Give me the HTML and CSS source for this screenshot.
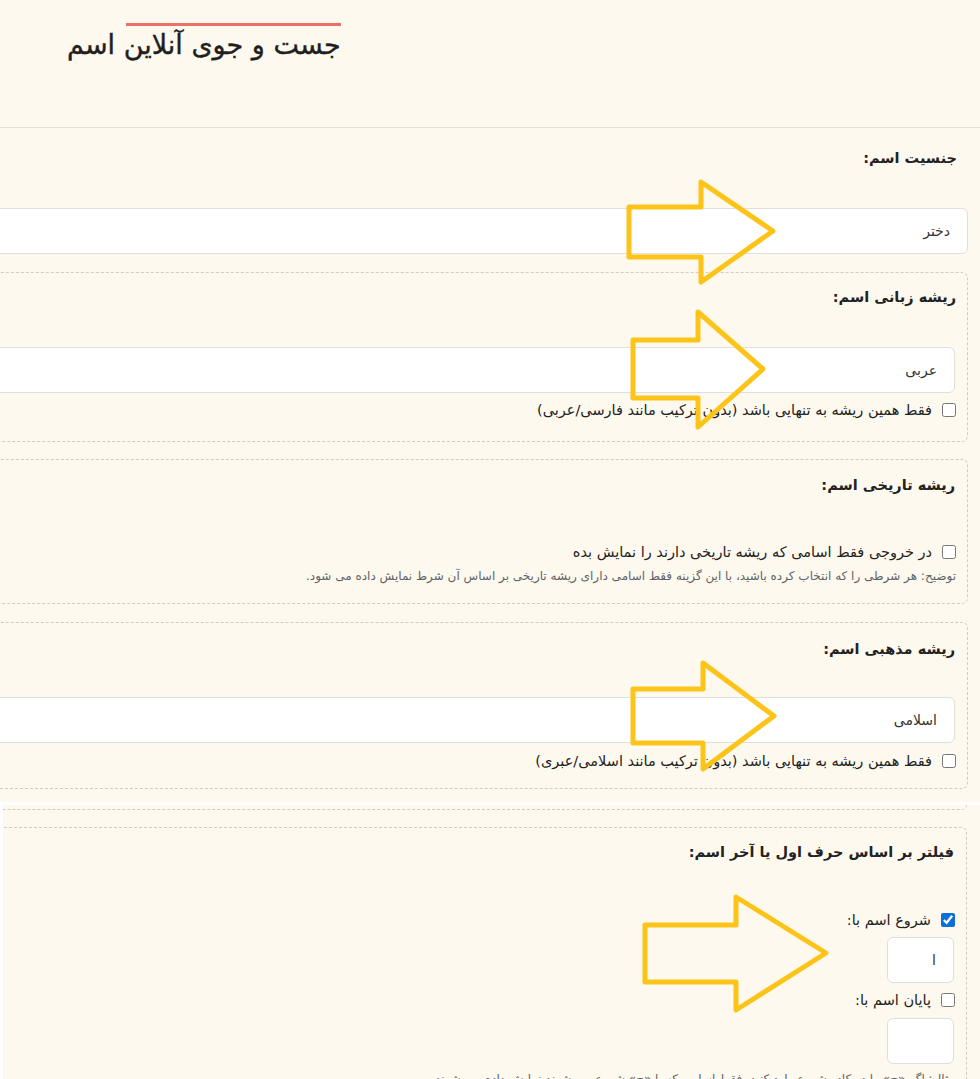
FILE: index.html
```html
<!DOCTYPE html>
<html lang="fa" dir="rtl">
<head>
<meta charset="utf-8">
<title>جست و جوی آنلاین اسم</title>
<link rel="stylesheet" href="styles.css">
</head>
<body>
<div class="page">
  <header class="header">
    <div class="title">
      <h1>جست و جوی آنلاین اسم</h1>
    </div>
  </header>

  <main class="form">
    <section class="field gender">
      <label class="label">جنسیت اسم:</label>
      <div class="input">دختر</div>
    </section>

    <section class="box box-lang">
      <label class="label">ریشه زبانی اسم:</label>
      <div class="input">عربی</div>
      <label class="check"><input type="checkbox"><span>فقط همین ریشه به تنهایی باشد (بدون ترکیب مانند فارسی/عربی)</span></label>
    </section>

    <section class="box box-hist">
      <label class="label">ریشه تاریخی اسم:</label>
      <label class="check"><input type="checkbox"><span>در خروجی فقط اسامی که ریشه تاریخی دارند را نمایش بده</span></label>
      <p class="hint">توضیح: هر شرطی را که انتخاب کرده باشید، با این گزینه فقط اسامی دارای ریشه تاریخی بر اساس آن شرط نمایش داده می شود.</p>
    </section>

    <section class="box box-rel">
      <label class="label">ریشه مذهبی اسم:</label>
      <div class="input">اسلامی</div>
      <label class="check"><input type="checkbox"><span>فقط همین ریشه به تنهایی باشد (بدون ترکیب مانند اسلامی/عبری)</span></label>
    </section>
  </main>

  <div class="lower">
    <div class="lower-inner">
      <div class="stub"></div>
      <section class="box box-letter">
        <label class="label">فیلتر بر اساس حرف اول یا آخر اسم:</label>
        <label class="check check-first"><input type="checkbox" checked><span>شروع اسم با:</span></label>
        <div class="input small">ا</div>
        <label class="check check-last"><input type="checkbox"><span>پایان اسم با:</span></label>
        <div class="input small"></div>
        <p class="hint hint-letter">مثال: اگر «ح» را در کادر شروع وارد کنید، فقط اسامی که با «ح» شروع می شوند نمایش داده می شوند.</p>
      </section>
    </div>
  </div>

  <svg class="arrows" width="980" height="1079" viewBox="0 0 980 1079" aria-hidden="true">
    <g fill="none" stroke="#fcc419" stroke-width="5" stroke-linejoin="round">
      <polygon points="629,207 701,207 701,182 773,231 701,282 701,257 629,257"/>
      <polygon points="633,340 698,340 698,312 763,369 698,427 698,398 633,398"/>
      <polygon points="633,689 703,689 703,663 774,716 703,769 703,743 633,743"/>
      <polygon points="645,925 736,925 736,897 826,953 736,1010 736,982 645,982"/>
    </g>
  </svg>
</div>
</body>
</html>
```

FILE: styles.css
```css
html, body {
  margin: 0;
  padding: 0;
  background: #fef9ee;
}

body {
  font-family: "DejaVu Sans", "Noto Sans", sans-serif;
  color: #212529;
}

.page {
  position: relative;
  width: 980px;
  height: 1079px;
  overflow: hidden;
  background: #fef9ee;
}

.header {
  border-bottom: 1px solid #e3e1dc;
  display: flex;
  justify-content: flex-end;
  padding-left: 67px;
  padding-top: 23px;
  box-sizing: border-box;
  height: 128px;
}

.title::before {
  content: "";
  display: block;
  width: 215px;
  height: 3px;
  background: #ec6f68;
}

.title h1 {
  margin: 0;
  font-size: 27px;
  line-height: 38px;
  font-weight: 400;
  color: #1f1f1f;
  -webkit-text-stroke: 0.4px #1f1f1f;
}

.form {
  margin-left: -300px;
  margin-right: 12px;
}

.label {
  display: block;
  font-size: 14.5px;
  line-height: 24px;
  font-weight: 600;
  color: #222;
}

.input {
  height: 46px;
  box-sizing: border-box;
  background: #fff;
  border: 1px solid #e0dfdc;
  border-radius: 6px;
  padding: 0 17px;
  font-size: 14px;
  line-height: 44px;
  color: #333;
}

.gender {
  padding-top: 18px;
}

.gender .label {
  margin-right: 11px;
  margin-bottom: 38px;
}

.box {
  border: 1px dashed #cfccc4;
  border-radius: 6px;
  padding: 12px 12px 20px 12px;
}

.box-lang {
  margin-top: 18px;
}

.box-lang .label {
  margin-bottom: 38px;
  margin-right: -1px;
}

.check {
  display: flex;
  align-items: center;
  gap: 10px;
  font-size: 14.5px;
  line-height: 22px;
  color: #222;
  margin-right: -1px;
}

.check input {
  margin: 0;
  width: 14px;
  height: 14px;
  accent-color: #0b6fd8;
}

.box-lang .check {
  margin-top: 6px;
}

.box-hist {
  margin-top: 17px;
  padding-top: 13px;
  padding-bottom: 18px;
}

.box-hist .label {
  margin-bottom: 44px;
}

.hint {
  margin: 4px -1px 0 0;
  font-size: 12px;
  line-height: 18px;
  color: #5f6368;
}

.box-rel {
  margin-top: 18px;
  padding-top: 14px;
  padding-bottom: 16px;
}

.box-rel .label {
  margin-bottom: 36px;
}

.box-rel .check {
  margin-top: 7px;
}

.lower {
  margin-top: 13px;
  border-top: 3px solid #fff;
  border-left: 3px solid #fff;
  overflow: hidden;
  height: 300px;
}

.lower-inner {
  margin-left: -300px;
  margin-right: 13px;
}

.stub {
  height: 4px;
  border: 1px dashed #cfccc4;
  border-top: none;
  border-radius: 0 0 6px 6px;
}

.box-letter {
  margin-top: 17px;
  padding-top: 12px;
}

.box-letter .label {
  margin-bottom: 45px;
}

.input.small {
  width: 67px;
  padding: 0 17px;
}

.check-first + .input {
  margin-top: 6px;
}

.check-last {
  margin-top: 6px;
}

.check-last + .input {
  margin-top: 7px;
}

.hint-letter {
  margin-top: 6px;
}

.arrows {
  position: absolute;
  left: 0;
  top: 0;
  pointer-events: none;
}
```
